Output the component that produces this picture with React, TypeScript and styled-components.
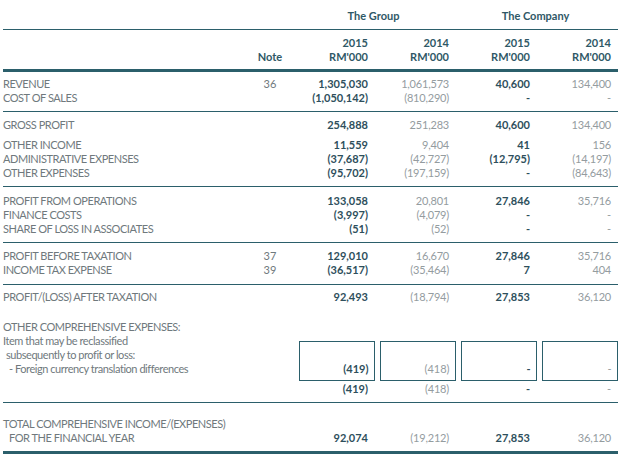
import React from "react";
import styled, { createGlobalStyle, css } from "styled-components";

const GlobalStyle = createGlobalStyle`
  html, body { margin: 0; padding: 0; background: #ffffff; }
  body { font-family: Lato, "Open Sans", sans-serif; }
`;

const LINE = "#2b5f6b";
const HEAD = "#2f5866";
const STRONG = "#2e4f5c";
const LABEL = "#6f797d";
const LIGHT = "#949c9f";

const COLS = "1fr 48px 76px 76px 76px 76px";

const Page = styled.div`
  width: 615px;
  margin: 0 3px;
  font-size: 11px;
  line-height: 14px;
`;

const Section = styled.div<{ $top?: number; $bottom?: number; $thick?: boolean }>`
  display: flex;
  flex-direction: column;
  padding-top: ${(p) => p.$top ?? 0}px;
  padding-bottom: ${(p) => p.$bottom ?? 0}px;
  border-bottom: ${(p) => (p.$thick ? "3px" : "1.5px")} solid ${LINE};
`;

const Row = styled.div<{ $gap?: number }>`
  display: grid;
  grid-template-columns: ${COLS};
  column-gap: 5px;
  margin-top: ${(p) => p.$gap ?? 0}px;
`;

const GroupHead = styled.div<{ $col: number }>`
  grid-column: ${(p) => p.$col} / span 2;
  text-align: center;
  padding-right: 8px;
  font-weight: 700;
  color: ${HEAD};
`;

const Label = styled.div<{ $indent?: number }>`
  color: ${LABEL};
  font-weight: 400;
  font-size: 11px;
  letter-spacing: -0.45px;
  padding-left: ${(p) => p.$indent ?? 0}px;
  white-space: pre;
`;

const Note = styled.div<{ $head?: boolean }>`
  text-align: center;
  color: ${(p) => (p.$head ? HEAD : LABEL)};
  font-weight: ${(p) => (p.$head ? 700 : 400)};
`;

const Num = styled.div<{ $bold?: boolean; $head?: boolean }>`
  text-align: right;
  padding-right: 7px;
  white-space: nowrap;
  ${(p) =>
    p.$head
      ? css`
          color: ${HEAD};
          font-weight: 700;
        `
      : p.$bold
      ? css`
          color: ${STRONG};
          font-weight: 700;
        `
      : css`
          color: ${LIGHT};
          font-weight: 400;
          letter-spacing: -0.2px;
        `}
`;

const Lines = styled.div`
  display: flex;
  flex-direction: column;
`;

const Box = styled.div<{ $bold?: boolean }>`
  margin-top: 7px;
  height: 40px;
  box-sizing: border-box;
  border: 1.5px solid ${LINE};
  display: flex;
  align-items: flex-end;
  justify-content: flex-end;
  padding: 0 5.5px 4px 0;
  font-weight: ${(p) => (p.$bold ? 700 : 400)};
  color: ${(p) => (p.$bold ? STRONG : LIGHT)};
`;

type V = [string, string, string, string];

const DataRow: React.FC<{ label: string; note?: string; v: V; gap?: number; indent?: number }> = ({
  label,
  note,
  v,
  gap,
  indent,
}) => (
  <Row $gap={gap}>
    <Label $indent={indent}>{label}</Label>
    <Note>{note ?? ""}</Note>
    <Num $bold>{v[0]}</Num>
    <Num>{v[1]}</Num>
    <Num $bold>{v[2]}</Num>
    <Num>{v[3]}</Num>
  </Row>
);

export default function App() {
  return (
    <Page>
      <GlobalStyle />
      <Section $top={9} $bottom={6}>
        <Row>
          <div />
          <div />
          <GroupHead $col={3}>The Group</GroupHead>
          <GroupHead $col={5}>The Company</GroupHead>
        </Row>
      </Section>
      <Section $top={6} $bottom={5} $thick>
        <Row>
          <div />
          <div />
          <Num $head>2015</Num>
          <Num $head>2014</Num>
          <Num $head>2015</Num>
          <Num $head>2014</Num>
        </Row>
        <Row>
          <div />
          <Note $head>Note</Note>
          <Num $head>RM'000</Num>
          <Num $head>RM'000</Num>
          <Num $head>RM'000</Num>
          <Num $head>RM'000</Num>
        </Row>
      </Section>
      <Section $top={5} $bottom={6}>
        <DataRow label="REVENUE" note="36" v={["1,305,030", "1,061,573", "40,600", "134,400"]} />
        <DataRow label="COST OF SALES" v={["(1,050,142)", "(810,290)", "-", "-"]} />
      </Section>
      <Section $top={6} $bottom={6}>
        <DataRow label="GROSS PROFIT" v={["254,888", "251,283", "40,600", "134,400"]} />
        <DataRow label="OTHER INCOME" gap={6} v={["11,559", "9,404", "41", "156"]} />
        <DataRow label="ADMINISTRATIVE EXPENSES" v={["(37,687)", "(42,727)", "(12,795)", "(14,197)"]} />
        <DataRow label="OTHER EXPENSES" v={["(95,702)", "(197,159)", "-", "(84,643)"]} />
      </Section>
      <Section $top={7} $bottom={6}>
        <DataRow label="PROFIT FROM OPERATIONS" v={["133,058", "20,801", "27,846", "35,716"]} />
        <DataRow label="FINANCE COSTS" v={["(3,997)", "(4,079)", "-", "-"]} />
        <DataRow label="SHARE OF LOSS IN ASSOCIATES" v={["(51)", "(52)", "-", "-"]} />
      </Section>
      <Section $top={6} $bottom={7}>
        <DataRow label="PROFIT BEFORE TAXATION" note="37" v={["129,010", "16,670", "27,846", "35,716"]} />
        <DataRow label="INCOME TAX EXPENSE" note="39" v={["(36,517)", "(35,464)", "7", "404"]} />
      </Section>
      <Section $top={5} $bottom={6}>
        <DataRow label="PROFIT/(LOSS) AFTER TAXATION" v={["92,493", "(18,794)", "27,853", "36,120"]} />
        <Row $gap={16}>
          <Label>OTHER COMPREHENSIVE EXPENSES:</Label>
        </Row>
        <Row>
          <Lines>
            <Label>Item that may be reclassified</Label>
            <Label $indent={3}>subsequently to profit or loss:</Label>
            <Label $indent={6}>- Foreign currency translation differences</Label>
          </Lines>
          <div />
          <Box $bold>(419)</Box>
          <Box>(418)</Box>
          <Box $bold>-</Box>
          <Box>-</Box>
        </Row>
        <DataRow label="" gap={1} v={["(419)", "(418)", "-", "-"]} />
      </Section>
      <Section $top={14} $bottom={6} $thick>
        <Row>
          <Label>TOTAL COMPREHENSIVE INCOME/(EXPENSES)</Label>
        </Row>
        <DataRow label="FOR THE FINANCIAL YEAR" indent={6} v={["92,074", "(19,212)", "27,853", "36,120"]} />
      </Section>
    </Page>
  );
}
